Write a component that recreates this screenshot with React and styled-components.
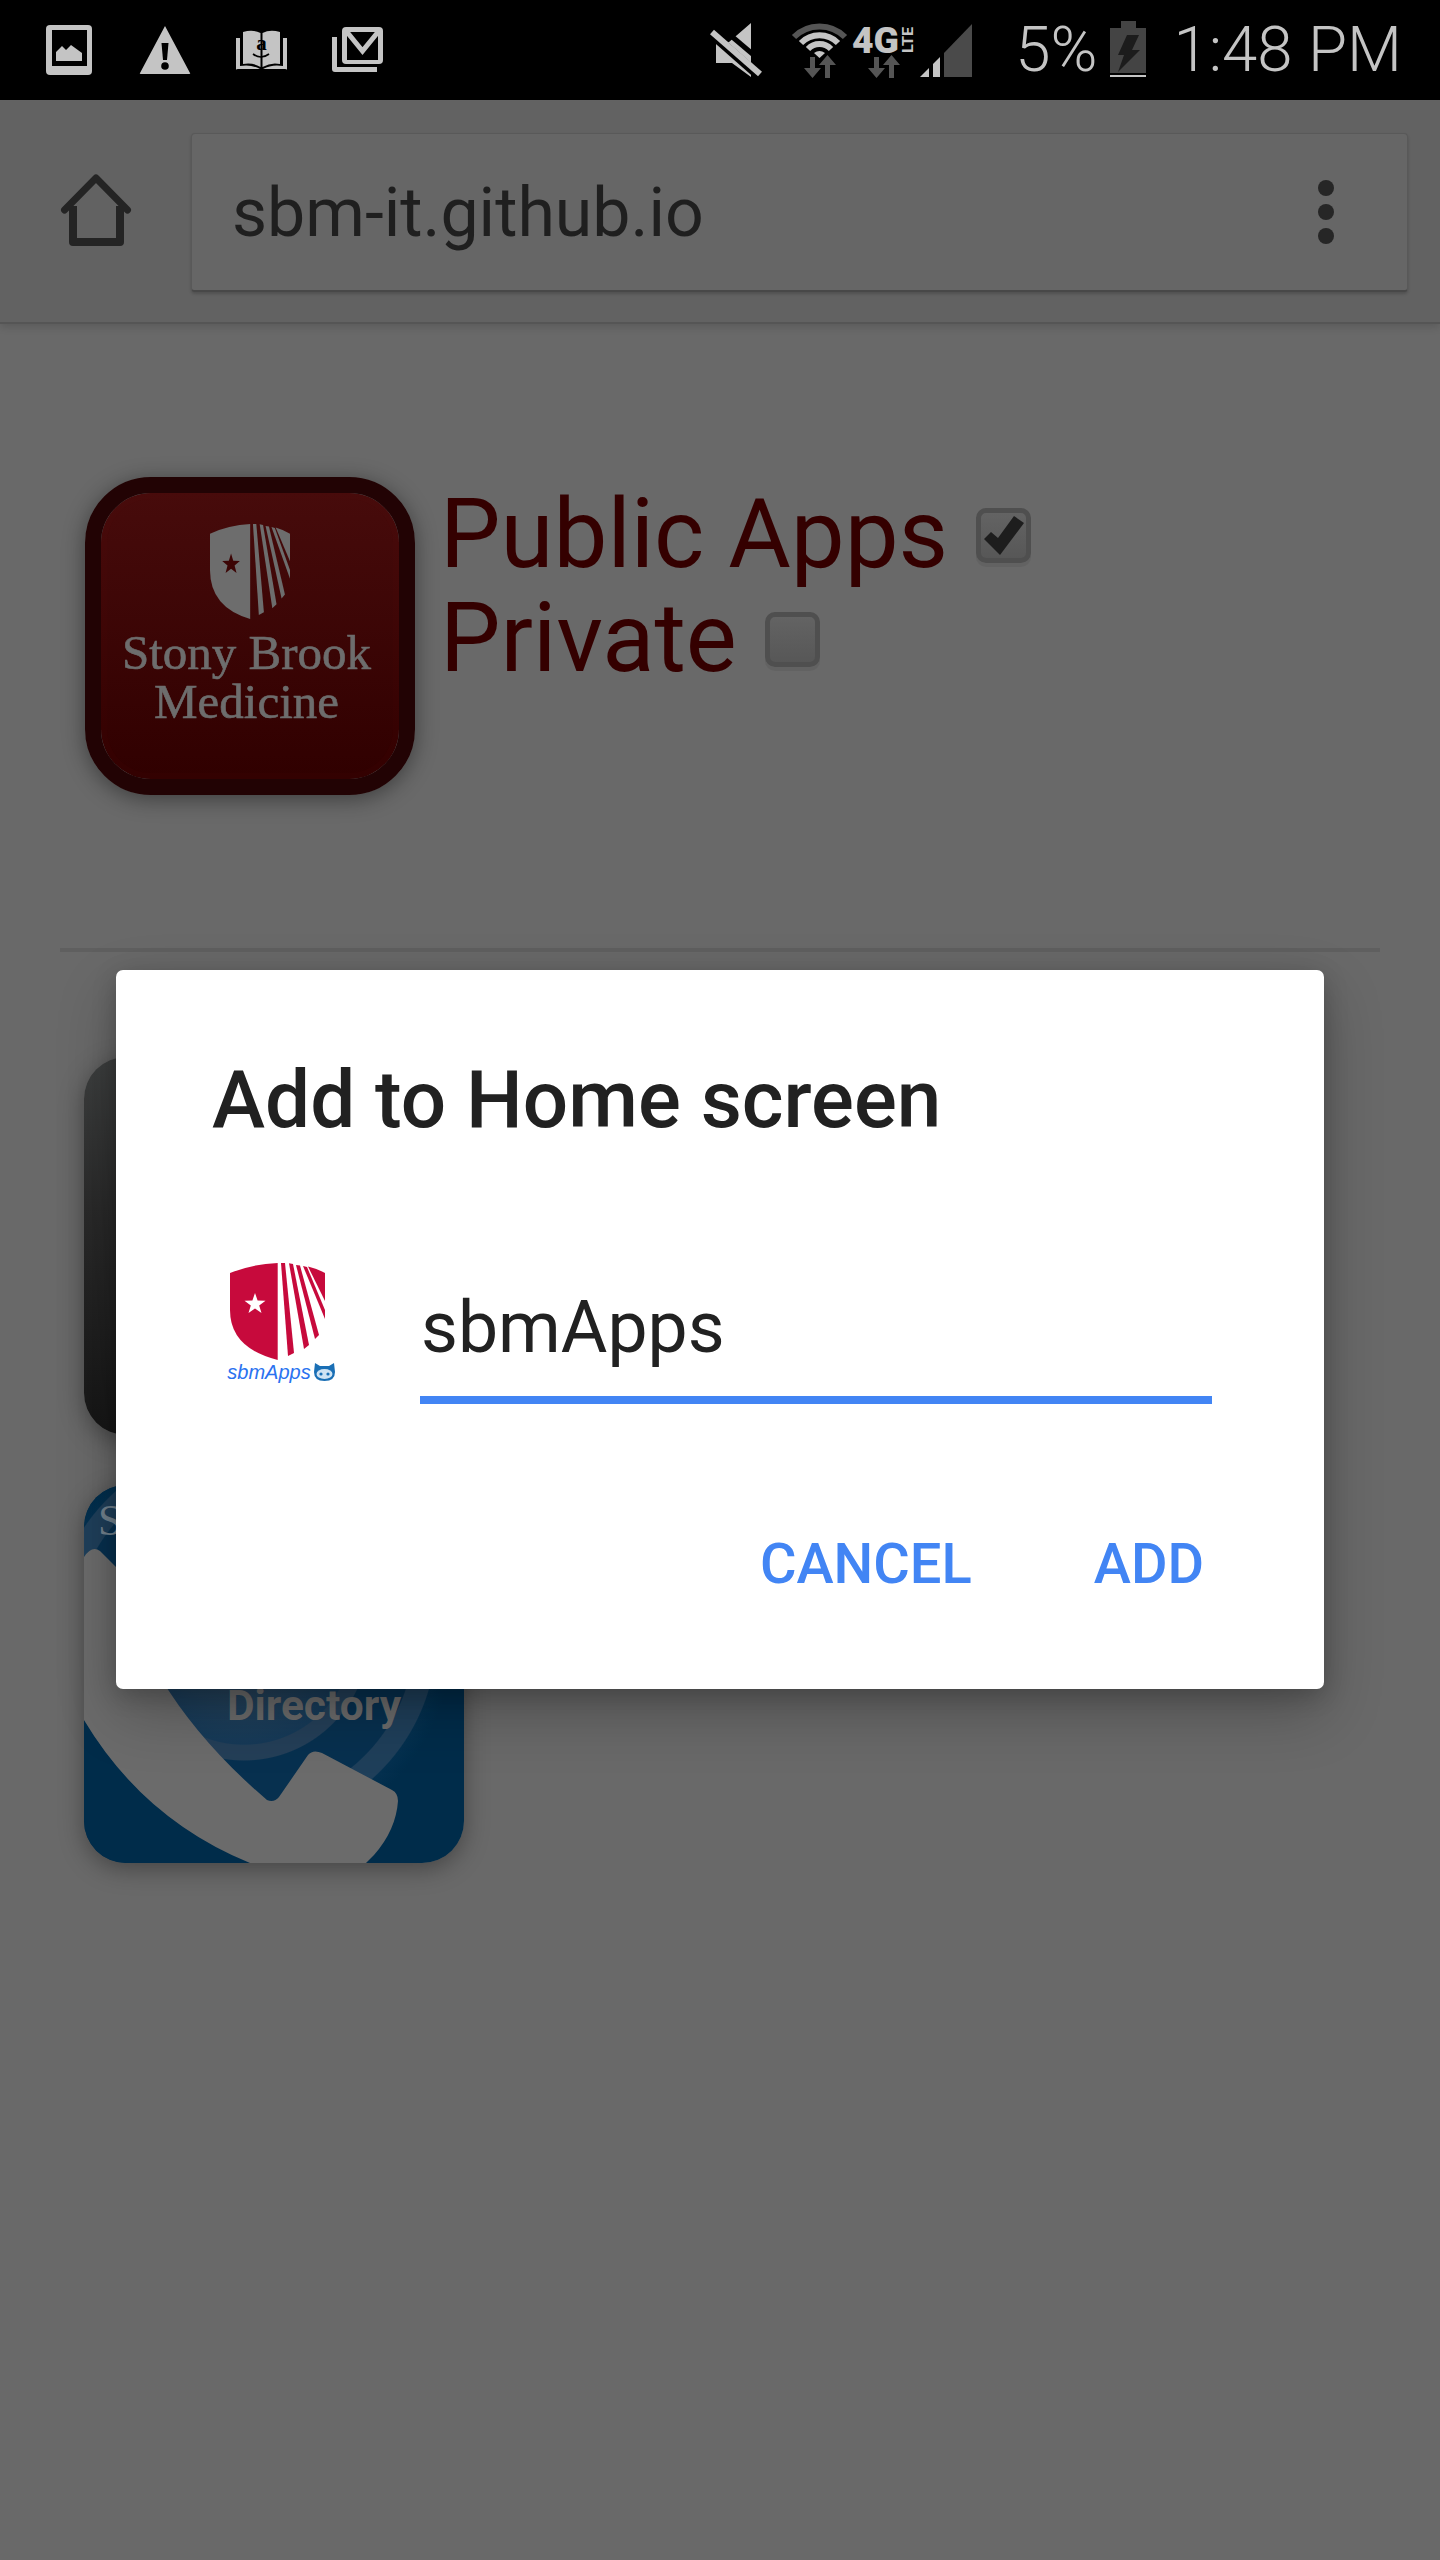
import React from "react";
import styled, { createGlobalStyle } from "styled-components";

const Global = createGlobalStyle`
  html, body { margin: 0; padding: 0; background: #696969; }
  * { box-sizing: border-box; }
`;

const Screen = styled.div`
  position: relative;
  width: 1440px;
  height: 2560px;
  overflow: hidden;
  background: #696969;
  font-family: Roboto, "Liberation Sans", sans-serif;
`;

const StatusBar = styled.header`
  display: flex;
  align-items: center;
  justify-content: space-between;
  height: 100px;
  padding: 0 38px 0 46px;
  background: #000;
  color: #c4c4c4;
`;

const StatusGroup = styled.div`
  display: flex;
  align-items: center;
`;

const StatusIcon = styled.svg`
  display: block;
  flex: none;
  width: ${(p) => p.$w}px;
  height: 60px;
  margin-left: ${(p) => p.$ml || 0}px;
  overflow: visible;
`;

const StatusText = styled.span`
  flex: none;
  font-weight: 300;
  font-size: ${(p) => p.$size}px;
  line-height: 60px;
  margin-left: ${(p) => p.$ml || 0}px;
  white-space: nowrap;
`;

const Toolbar = styled.div`
  position: relative;
  display: flex;
  align-items: center;
  height: 224px;
  padding: 8px 32px 0 60px;
  background: #626262;
  border-bottom: 2px solid #555;
  box-shadow: 0 3px 8px rgba(0, 0, 0, 0.14);
`;

const HomeIcon = styled.svg`
  display: block;
  flex: none;
  width: 72px;
  height: 72px;
  margin: -10px 59px 0 0;
  overflow: visible;
`;

const AddressBox = styled.div`
  display: flex;
  flex: 1;
  align-items: center;
  justify-content: space-between;
  height: 159px;
  margin-top: -6px;
  padding: 0 73px 0 40px;
  background: #666;
  border: 1px solid #595959;
  border-bottom: 2px solid #484848;
  border-radius: 4px;
  box-shadow: 0 2px 3px rgba(0, 0, 0, 0.18);
`;

const AddressText = styled.span`
  font-size: 68px;
  line-height: 80px;
  color: #1f1f1f;
  margin-top: 3px;
`;

const MenuDots = styled.div`
  display: flex;
  flex-direction: column;
  gap: 8px;
`;

const MenuDot = styled.span`
  width: 16px;
  height: 16px;
  border-radius: 50%;
  background: #262626;
`;

const Content = styled.main`
  display: flex;
  flex-direction: column;
`;

const Header = styled.section`
  display: flex;
  align-items: flex-start;
  gap: 25px;
  padding: 153px 0 0 85px;
`;

const Logo = styled.div`
  display: flex;
  flex-direction: column;
  align-items: center;
  flex: none;
  width: 330px;
  height: 318px;
  padding-top: 31px;
  border: 16px solid #220304;
  border-radius: 66px;
  background: linear-gradient(#470b0b, #300000);
  box-shadow: 0 4px 22px rgba(0, 0, 0, 0.42), inset 0 0 0 6px rgba(110, 10, 10, 0.06);
  background-clip: padding-box;
`;

const LogoShield = styled.svg`
  display: block;
  flex: none;
  width: 80px;
  height: 95px;
`;

const LogoText = styled.div`
  margin-top: 9px;
  padding-right: 7px;
  font-family: "Liberation Serif", serif;
  font-size: 49px;
  line-height: 49px;
  text-align: center;
  color: #6d6d6d;
  -webkit-text-stroke: 0.6px #6d6d6d;
  white-space: nowrap;
`;

const Labels = styled.div`
  display: flex;
  flex-direction: column;
  padding-top: 5px;
`;

const LabelRow = styled.label`
  display: flex;
  align-items: flex-start;
  gap: 28px;
  font-size: 96px;
  line-height: 104px;
  color: #340000;
`;

const CheckBox = styled.span`
  display: block;
  flex: none;
  width: 55px;
  height: 55px;
  margin-top: 26px;
  border: 5px solid #4f4f4f;
  border-radius: 10px;
  background: linear-gradient(#636363, #575757);
  box-shadow: 0 4px 0 rgba(0, 0, 0, 0.06);
`;

const CheckMark = styled.svg`
  display: block;
  width: 45px;
  height: 45px;
`;

const Divider = styled.hr`
  width: 1320px;
  height: 4px;
  margin: 153px 0 105px 60px;
  border: 0;
  background: #5f5f5f;
`;

const Tiles = styled.div`
  display: flex;
  flex-direction: column;
  gap: 50px;
  padding-left: 84px;
`;

const DarkTile = styled.div`
  width: 380px;
  height: 378px;
  border-radius: 42px;
  background: linear-gradient(#3d3f3f, #2a2a2a 40%, #161616);
  box-shadow: 0 6px 24px rgba(0, 0, 0, 0.35);
`;

const BlueTile = styled.svg`
  display: block;
  width: 380px;
  height: 378px;
  border-radius: 42px;
  box-shadow: 0 6px 24px rgba(0, 0, 0, 0.35);
`;

const Dialog = styled.div`
  position: absolute;
  left: 116px;
  top: 970px;
  display: flex;
  flex-direction: column;
  width: 1208px;
  height: 719px;
  padding: 82px 112px 0 96px;
  background: #fff;
  border-radius: 7px;
  box-shadow: 0 24px 60px rgba(0, 0, 0, 0.24), 0 6px 24px rgba(0, 0, 0, 0.2);
  color: #212121;
`;

const DialogTitle = styled.h2`
  margin: 0;
  font-size: 80px;
  font-weight: 500;
  line-height: 96px;
  white-space: nowrap;
`;

const FieldRow = styled.div`
  display: flex;
  align-items: flex-start;
  margin-top: 115px;
`;

const AppMark = styled.div`
  display: flex;
  flex-direction: column;
  align-items: center;
  flex: none;
  width: 110px;
  margin-left: 10px;
  margin-right: 88px;
`;

const AppMarkShield = styled.svg`
  display: block;
  width: 95px;
  height: 97px;
`;

const AppMarkCaption = styled.div`
  display: flex;
  align-items: center;
  gap: 3px;
  margin-top: 2px;
  margin-left: 8px;
  font-family: "Liberation Sans", sans-serif;
  font-style: italic;
  font-size: 20px;
  line-height: 20px;
  color: #2a72f0;
  white-space: nowrap;
`;

const CatIcon = styled.svg`
  display: block;
  width: 21px;
  height: 18px;
  flex: none;
`;

const NameField = styled.div`
  flex: 1;
  height: 128px;
  margin-top: 13px;
  padding: 8px 0 0 1px;
  border-bottom: 8px solid #4285f4;
  font-size: 71.5px;
  line-height: 88px;
  color: #212121;
`;

const Actions = styled.div`
  display: flex;
  justify-content: flex-end;
  gap: 122px;
  margin-top: 127px;
  padding-right: 8px;
`;

const ActionButton = styled.button`
  padding: 0;
  border: 0;
  background: none;
  font-family: inherit;
  font-size: 56px;
  font-weight: 500;
  line-height: 66px;
  color: #4285f4;
`;

const Shield = ({ fill, star }) => (
  <>
    <path d="M0 10 Q22 1 47.7 0 V97 Q0 85 0 47 Z" fill={fill} />
    <path d="M51 0 L55 0 L64 90 L58 93 Z" fill={fill} />
    <path d="M59 .3 L63 1 L79 82 L74 86 Z" fill={fill} />
    <path d="M66 2 L70 2.6 L89 72 L85 76 Z" fill={fill} />
    <path d="M73 3 L77 4 L95 47 L95 56 Z" fill={fill} />
    <path d="M78 3.5 Q88 6 95 10 V38 Z" fill={fill} />
    <path
      d="M25 30 L27.6 37.5 L35.5 37.7 L29.2 42.5 L31.5 50 L25 45.6 L18.5 50 L20.8 42.5 L14.5 37.7 L22.4 37.5 Z"
      fill={star}
    />
  </>
);

const light = "#c4c4c4";
const dim = "#555";

const Arrows = ({ x, color }) => (
  <g fill={color} transform={`translate(${x} 0)`}>
    <path d="M6 37 H11 V48 H17 L8.5 58 L0 48 H6 Z" />
    <path d="M21 58 H26 V45 H32 L23.5 35 L15 45 H21 Z" />
  </g>
);

export default function App() {
  return (
    <Screen>
      <Global />
      <StatusBar>
        <StatusGroup>
          <StatusIcon $w={46} viewBox="0 0 46 60">
            <rect y="5" width="46" height="50" rx="4" fill={light} />
            <rect x="6" y="10" width="35" height="36" fill="#000" />
            <path d="M10 41 V32 L16 26 L20 30 L25 25 L36 33 V41 Z" fill={light} />
          </StatusIcon>
          <StatusIcon $w={52} $ml={47} viewBox="0 0 52 60">
            <path d="M26 6 L51 53 Q52 54 50 54 H2 Q0 54 1 53 Z" fill={light} />
            <path d="M22.5 23 H29.5 L28 40 H24 Z" fill="#000" />
            <circle cx="26" cy="46" r="3.8" fill="#000" />
          </StatusIcon>
          <StatusIcon $w={51} $ml={45} viewBox="0 0 51 60">
            <path d="M7 12 Q17 9 24.5 13 V47 Q16 42 7 44 Z" fill={light} />
            <path d="M44 12 Q34 9 26.5 13 V47 Q35 42 44 44 Z" fill={light} />
            <path d="M0 18 H4 V46 Q15 44 24 49 H2 Q0 49 0 50 Z" fill={light} />
            <path d="M51 18 H47 V46 Q36 44 27 49 H49 Q51 49 51 50 Z" fill={light} />
            <text x="25.5" y="30" fontFamily="Liberation Serif" fontWeight="700" fontSize="21" textAnchor="middle" fill="#000">a</text>
            <path d="M17 34 Q25 40 33 34" fill="none" stroke="#000" strokeWidth="1.6" />
          </StatusIcon>
          <StatusIcon $w={51} $ml={45} viewBox="0 0 51 60">
            <path d="M0 17 H5 V47 H45 V52 H3 Q0 52 0 49 Z" fill={light} />
            <rect x="10" y="7" width="41" height="37" rx="4" fill={light} />
            <rect x="15" y="12" width="31" height="28" fill="#000" />
            <path d="M15 12 L30.5 31 L46 12" fill="none" stroke={light} strokeWidth="5" />
          </StatusIcon>
        </StatusGroup>
        <StatusGroup>
          <StatusIcon $w={51} viewBox="0 0 51 60">
            <path d="M41 3 V57 L22 43 H6 V22 H19 Z" fill={light} />
            <path d="M-3 10 L47 54" stroke="#000" strokeWidth="9" />
            <path d="M2 12 L50 54" stroke={light} strokeWidth="6" />
            <path d="M13 9 L52 42" stroke="#000" strokeWidth="5" />
          </StatusIcon>
          <StatusIcon $w={55} $ml={31} viewBox="0 0 55 60">
            <g fill="none" strokeWidth="6">
              <path d="M2 17 A36 36 0 0 1 53 17" stroke={dim} />
              <path d="M9 23 A26 26 0 0 1 46 23" stroke={light} />
              <path d="M16 29 A16 16 0 0 1 39 29" stroke={light} />
            </g>
            <path d="M22 33 Q27.5 29 33 33 L27.5 38 Z" fill={light} />
            <Arrows x={12} color={dim} />
          </StatusIcon>
          <StatusIcon $w={61} $ml={6} viewBox="0 0 61 60">
            <text x="-1" y="33" fontFamily="Roboto" fontWeight="900" fontSize="36" textLength="47" lengthAdjust="spacingAndGlyphs" fill={light}>4G</text>
            <text transform="translate(60 33) rotate(-90)" fontFamily="Roboto" fontWeight="700" fontSize="14" textLength="26" lengthAdjust="spacingAndGlyphs" fill={light}>LTE</text>
            <Arrows x={15} color={dim} />
          </StatusIcon>
          <StatusIcon $w={52} $ml={6} viewBox="0 0 52 60">
            <path d="M0 57 L9 48 V57 Z" fill={light} />
            <path d="M13 44 L20 37 V57 H13 Z" fill={light} />
            <path d="M24 33 L52 4 V57 H24 Z" fill="#4a4a4a" />
          </StatusIcon>
          <StatusText $size={63.5} $ml={43}>5%</StatusText>
          <StatusIcon $w={36} $ml={13} viewBox="0 0 36 60">
            <rect x="11" y="1" width="15" height="8" fill="#444" />
            <rect y="8" width="36" height="45" fill="#444" />
            <rect y="55" width="36" height="2" fill={light} />
            <path d="M17 15 H29 L22 30 H30 L8 52 L14 35 H8 Z" fill="#1c1c1c" />
          </StatusIcon>
          <StatusText $size={63.5} $ml={27}>1:48 PM</StatusText>
        </StatusGroup>
      </StatusBar>

      <Toolbar>
        <HomeIcon viewBox="0 0 72 72">
          <path d="M4.5 36 L36 4 L67.5 36" fill="none" stroke="#242424" strokeWidth="7" strokeLinecap="round" strokeLinejoin="round" />
          <path d="M13 32 V68 H60 V32" fill="none" stroke="#242424" strokeWidth="8" strokeLinejoin="round" />
        </HomeIcon>
        <AddressBox>
          <AddressText>sbm-it.github.io</AddressText>
          <MenuDots>
            <MenuDot />
            <MenuDot />
            <MenuDot />
          </MenuDots>
        </AddressBox>
      </Toolbar>

      <Content>
        <Header>
          <Logo>
            <LogoShield viewBox="0 0 95 97" preserveAspectRatio="none">
              <Shield fill="#6d6d6d" star="#3c0505" />
            </LogoShield>
            <LogoText>
              Stony Brook
              <br />
              Medicine
            </LogoText>
          </Logo>
          <Labels>
            <LabelRow>
              Public Apps
              <CheckBox>
                <CheckMark viewBox="5 5 45 45">
                  <path d="M8 31 L15 24 L22 30 L38 8 L48 15 L24 47 Z" fill="#1d1d1d" />
                </CheckMark>
              </CheckBox>
            </LabelRow>
            <LabelRow>
              Private
              <CheckBox />
            </LabelRow>
          </Labels>
        </Header>
        <Divider />
        <Tiles>
          <DarkTile />
          <BlueTile viewBox="0 0 380 378">
            <defs>
              <radialGradient id="disc" cx="160" cy="150" r="210" gradientUnits="userSpaceOnUse">
                <stop offset="0" stopColor="#34495c" />
                <stop offset="0.52" stopColor="#163a58" />
                <stop offset="0.525" stopColor="#243f58" />
                <stop offset="0.595" stopColor="#243f58" />
                <stop offset="0.6" stopColor="#07304f" />
                <stop offset="0.81" stopColor="#07304f" />
                <stop offset="0.815" stopColor="#1f3f5a" />
                <stop offset="0.915" stopColor="#1f3f5a" />
                <stop offset="0.92" stopColor="#04304f" />
                <stop offset="1" stopColor="#002c4a" />
              </radialGradient>
            </defs>
            <rect width="380" height="378" fill="#002c4a" />
            <circle cx="160" cy="150" r="210" fill="url(#disc)" />
            <path d="M0 235 Q60 335 166 378 H0 Z" fill="#002c4a" />
            <text x="143" y="235" fontFamily="Roboto" fontWeight="700" fontSize="42" textLength="174" lengthAdjust="spacingAndGlyphs" fill="#6b6b6b">Directory</text>
            <text x="14" y="50" fontFamily="Liberation Serif" fontSize="44" fill="#73838f">S</text>
            <path
              d="M0 72 Q8 60 16 66 L32 82 Q60 210 183 315 Q190 318 195 312 L224 270 Q229 264 238 268 L308 305 Q314 308 314 316 Q312 345 290 370 L282 378 H166 Q60 335 0 235 Z"
              fill="#6b6b6b"
            />
          </BlueTile>
        </Tiles>
      </Content>

      <Dialog>
        <DialogTitle>Add to Home screen</DialogTitle>
        <FieldRow>
          <AppMark>
            <AppMarkShield viewBox="0 0 95 97">
              <Shield fill="#c70a3c" star="#fff" />
            </AppMarkShield>
            <AppMarkCaption>
              sbmApps
              <CatIcon viewBox="0 0 21 18">
                <path d="M1 0 L6 3 H15 L20 0 L21 9 Q21 18 10.5 18 Q0 18 0 9 Z" fill="#1a6fb5" />
                <ellipse cx="10.5" cy="11" rx="8" ry="5" fill="#cfe3f3" />
                <circle cx="7" cy="11" r="1.6" fill="#1a6fb5" />
                <circle cx="14" cy="11" r="1.6" fill="#1a6fb5" />
              </CatIcon>
            </AppMarkCaption>
          </AppMark>
          <NameField>sbmApps</NameField>
        </FieldRow>
        <Actions>
          <ActionButton>CANCEL</ActionButton>
          <ActionButton>ADD</ActionButton>
        </Actions>
      </Dialog>
    </Screen>
  );
}
